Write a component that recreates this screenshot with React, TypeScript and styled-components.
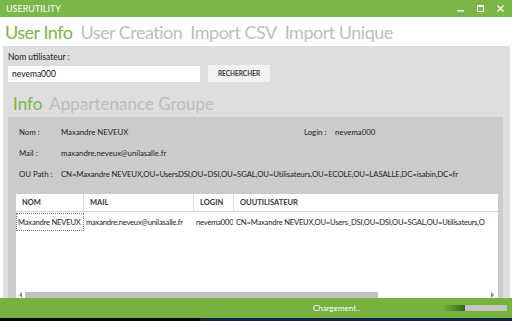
import styled, { createGlobalStyle } from "styled-components";

const GlobalStyle = createGlobalStyle`
  html, body {
    margin: 0;
    padding: 0;
    background: #ffffff;
  }
  body {
    font-family: "Segoe UI", Lato, "Noto Sans", sans-serif;
  }
`;

const green = "#7ab648";

const Window = styled.div`
  width: 512px;
  height: 321px;
  display: flex;
  flex-direction: column;
  overflow: hidden;
  background: #ffffff;
`;

const TitleBar = styled.div`
  height: 17px;
  background: ${green};
  display: flex;
  align-items: center;
  justify-content: space-between;
  padding: 0 6px;
  color: #ffffff;
  font-size: 9px;
`;

const WindowButtons = styled.div`
  display: flex;
  gap: 13px;
  align-items: center;
  padding-right: 2px;
`;

const TabStrip = styled.div`
  height: 29px;
  display: flex;
  align-items: center;
  gap: 8px;
  padding-left: 5px;
`;

const Tab = styled.span<{ $active?: boolean }>`
  font-size: 18px;
  color: ${(p) => (p.$active ? green : "#bdbdbd")};
  letter-spacing: -0.5px;
`;

const Panel = styled.div`
  flex: 1;
  margin: 0 2px 0 3px;
  background: #dedede;
  display: flex;
  flex-direction: column;
  padding: 5px 0 0 5px;
  min-height: 0;
`;

const FieldLabel = styled.div`
  font-size: 8.5px;
  color: #222;
  height: 13px;
  line-height: 13px;
`;

const SearchRow = styled.div`
  display: flex;
  gap: 8px;
  margin-top: 1px;
  align-items: center;
`;

const TextInput = styled.div`
  width: 188px;
  height: 16px;
  background: #ffffff;
  font-size: 8.5px;
  line-height: 16px;
  padding-left: 4px;
  color: #111;
`;

const SearchButton = styled.div`
  width: 62px;
  height: 17px;
  background: #f3f3f3;
  font-size: 6.5px;
  font-weight: bold;
  color: #333;
  display: flex;
  align-items: center;
  justify-content: center;
`;

const SubTabs = styled.div`
  display: flex;
  gap: 7px;
  padding-left: 5px;
  margin-top: 8px;
  height: 27px;
  align-items: center;
`;

const SubTab = styled.span<{ $active?: boolean }>`
  font-size: 17px;
  color: ${(p) => (p.$active ? green : "#bdbdbd")};
`;

const InfoPanel = styled.div`
  flex: 1;
  margin-right: 7px;
  background: #cbcbcb;
  display: flex;
  flex-direction: column;
  padding: 4px 5px 0 8px;
  min-height: 0;
`;

const InfoGrid = styled.div`
  display: grid;
  grid-template-columns: 42px 243px 31px 1fr;
  grid-auto-rows: 21px;
  align-items: center;
  font-size: 7.8px;
  color: #222;
  padding-left: 3px;
`;

const Wide = styled.span<{ $tight?: boolean }>`
  grid-column: 2 / span 3;
  white-space: nowrap;
  letter-spacing: ${(p) => (p.$tight ? "-0.12px" : "0")};
`;

const Table = styled.div`
  margin-top: 10px;
  flex: 1;
  background: #ffffff;
  display: flex;
  flex-direction: column;
  overflow: hidden;
`;

const HeaderRow = styled.div`
  display: flex;
  height: 17px;
  border-bottom: 1px solid #d4d4d4;
  margin-bottom: 1px;
`;

const HeaderCell = styled.div<{ $w: number }>`
  width: ${(p) => p.$w}px;
  flex: none;
  border-right: 1px solid #dcdcdc;
  font-size: 7.5px;
  font-weight: bold;
  color: #333;
  padding-left: 6px;
  display: flex;
  align-items: center;
  box-sizing: border-box;
  &:last-child {
    border-right: none;
    flex: 1;
  }
`;

const DataRow = styled.div`
  display: flex;
  height: 18px;
`;

const DataCell = styled.div<{ $w: number; $focus?: boolean }>`
  width: ${(p) => p.$w}px;
  flex: none;
  font-size: 7.6px;
  letter-spacing: -0.2px;
  color: #222;
  padding-left: 1px;
  display: flex;
  align-items: center;
  box-sizing: border-box;
  white-space: nowrap;
  overflow: hidden;
  border: 1px dotted ${(p) => (p.$focus ? "#777" : "transparent")};
  &:last-child {
    flex: 1;
  }
`;

const TableBody = styled.div`
  flex: 1;
`;

const ScrollBar = styled.div`
  height: 6px;
  display: flex;
  align-items: center;
  gap: 3px;
  padding: 0 4px 0 3px;
`;

const Arrow = styled.div<{ $dir: "left" | "right" }>`
  width: 0;
  height: 0;
  border-top: 3px solid transparent;
  border-bottom: 3px solid transparent;
  ${(p) =>
    p.$dir === "left"
      ? "border-right: 3px solid #888;"
      : "border-left: 3px solid #888; margin-left: auto;"}
`;

const Thumb = styled.div`
  width: 353px;
  height: 6px;
  background: #c2c2c2;
`;

const StatusBar = styled.div`
  height: 20px;
  background: #76b03e;
  display: flex;
  align-items: center;
  padding-left: 313px;
  padding-right: 5px;
  color: #ffffff;
  font-size: 8px;
`;

const Progress = styled.div`
  margin-left: auto;
  width: 64px;
  height: 6px;
  display: flex;
  background: #c4c4c4;
`;

const ProgressFill = styled.div`
  width: 22px;
  background: linear-gradient(to right, #76b03e, #2f6a14);
`;

const Taskbar = styled.div`
  height: 3px;
  background: linear-gradient(to right, #050505 0, #050505 200px, #0d2147 200px);
`;

const columns = [68, 110, 40, 0];

export default function App() {
  return (
    <>
      <GlobalStyle />
      <Window>
        <TitleBar>
          <span>USERUTILITY</span>
          <WindowButtons>
            <svg width="7" height="7" viewBox="0 0 7 7">
              <rect x="0" y="5" width="7" height="1.5" fill="#fff" />
            </svg>
            <svg width="7" height="7" viewBox="0 0 7 7">
              <rect x="0.5" y="0.5" width="6" height="6" fill="none" stroke="#fff" strokeWidth="1" />
              <rect x="0.5" y="0.5" width="6" height="1.5" fill="#fff" />
            </svg>
            <svg width="7" height="7" viewBox="0 0 7 7">
              <path d="M0.5 0.5 L6.5 6.5 M6.5 0.5 L0.5 6.5" stroke="#fff" strokeWidth="1.2" />
            </svg>
          </WindowButtons>
        </TitleBar>
        <TabStrip>
          <Tab $active>User Info</Tab>
          <Tab>User Creation</Tab>
          <Tab>Import CSV</Tab>
          <Tab>Import Unique</Tab>
        </TabStrip>
        <Panel>
          <FieldLabel>Nom utilisateur :</FieldLabel>
          <SearchRow>
            <TextInput>nevema000</TextInput>
            <SearchButton>RECHERCHER</SearchButton>
          </SearchRow>
          <SubTabs>
            <SubTab $active>Info</SubTab>
            <SubTab>Appartenance Groupe</SubTab>
          </SubTabs>
          <InfoPanel>
            <InfoGrid>
              <span>Nom :</span>
              <span>Maxandre NEVEUX</span>
              <span>Login :</span>
              <span>nevema000</span>
              <span>Mail :</span>
              <Wide>maxandre.neveux@unilasalle.fr</Wide>
              <span>OU Path :</span>
              <Wide $tight>
                CN=Maxandre NEVEUX,OU=UsersDSI,OU=DSI,OU=SGAL,OU=Utilisateurs,OU=ECOLE,OU=LASALLE,DC=isabin,DC=fr
              </Wide>
            </InfoGrid>
            <Table>
              <HeaderRow>
                <HeaderCell $w={columns[0]}>NOM</HeaderCell>
                <HeaderCell $w={columns[1]}>MAIL</HeaderCell>
                <HeaderCell $w={columns[2]}>LOGIN</HeaderCell>
                <HeaderCell $w={columns[3]}>OUUTILISATEUR</HeaderCell>
              </HeaderRow>
              <DataRow>
                <DataCell $w={columns[0]} $focus>
                  Maxandre NEVEUX
                </DataCell>
                <DataCell $w={columns[1]}>maxandre.neveux@unilasalle.fr</DataCell>
                <DataCell $w={columns[2]}>nevema000</DataCell>
                <DataCell $w={columns[3]}>
                  CN=Maxandre NEVEUX,OU=Users_DSI,OU=DSI,OU=SGAL,OU=Utilisateurs,O
                </DataCell>
              </DataRow>
              <TableBody />
              <ScrollBar>
                <Arrow $dir="left" />
                <Thumb />
                <Arrow $dir="right" />
              </ScrollBar>
            </Table>
          </InfoPanel>
        </Panel>
        <StatusBar>
          <span>Chargement..</span>
          <Progress>
            <ProgressFill />
          </Progress>
        </StatusBar>
        <Taskbar />
      </Window>
    </>
  );
}
